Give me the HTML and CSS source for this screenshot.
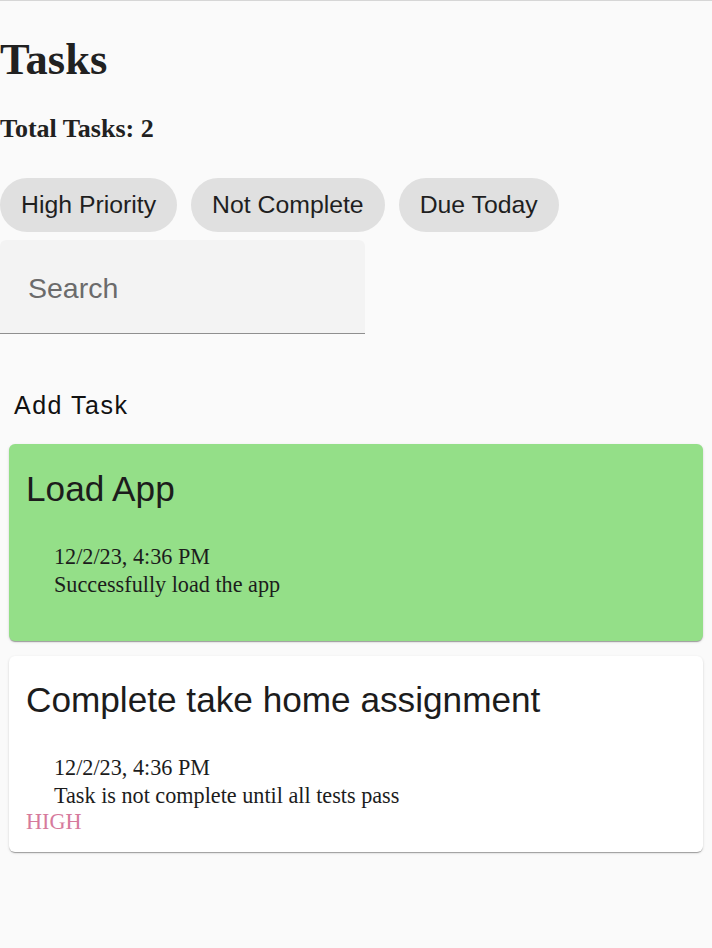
FILE: index.html
```html
<!DOCTYPE html>
<html lang="en">
<head>
<meta charset="utf-8">
<title>Tasks</title>
<link rel="stylesheet" href="styles.css">
</head>
<body>
<div class="page">
  <h1 class="title">Tasks</h1>
  <h3 class="total">Total Tasks: 2</h3>
  <div class="chips">
    <span class="chip">High Priority</span>
    <span class="chip">Not Complete</span>
    <span class="chip">Due Today</span>
  </div>
  <div class="search">
    <span class="search-label">Search</span>
  </div>
  <div class="add-task">Add Task</div>
  <div class="cards">
    <div class="card card-done">
      <div class="card-title">Load App</div>
      <div class="card-body">
        <div class="card-line">12/2/23, 4:36 PM</div>
        <div class="card-line">Successfully load the app</div>
      </div>
      <div class="priority"></div>
    </div>
    <div class="card">
      <div class="card-title">Complete take home assignment</div>
      <div class="card-body">
        <div class="card-line">12/2/23, 4:36 PM</div>
        <div class="card-line">Task is not complete until all tests pass</div>
      </div>
      <div class="priority">HIGH</div>
    </div>
  </div>
</div>
</body>
</html>
```

FILE: styles.css
```css
html, body {
  margin: 0;
  padding: 0;
  background: #fafafa;
}
body {
  font-family: "Liberation Serif", "Times New Roman", serif;
  color: #212121;
}
.page {
  border-top: 1px solid #d6d6d6;
  min-height: 946px;
}
.title {
  margin: 34px 0 0 0;
  font-size: 44.5px;
  line-height: 48px;
  font-weight: bold;
}
.total {
  margin: 32px 0 0 0;
  font-size: 26px;
  line-height: 28px;
  font-weight: bold;
}
.chips {
  display: flex;
  gap: 14px;
  margin-top: 35px;
}
.chip {
  display: flex;
  align-items: center;
  height: 54px;
  padding: 0 21px;
  border-radius: 27px;
  background: #e0e0e0;
  font-family: "Liberation Sans", Arial, sans-serif;
  font-size: 24.8px;
  color: #1f1f1f;
}
.search {
  margin-top: 8px;
  width: 365px;
  height: 93px;
  box-sizing: content-box;
  background: #f3f3f3;
  border-radius: 6px 6px 0 0;
  border-bottom: 1px solid #8f8f8f;
  display: flex;
  flex-direction: column;
}
.search-label {
  margin: 32px 0 0 28px;
  font-family: "Liberation Sans", Arial, sans-serif;
  font-size: 28.5px;
  line-height: 32px;
  color: #6b6b6b;
}
.add-task {
  margin: 56px 0 0 14px;
  font-family: "Liberation Sans", Arial, sans-serif;
  font-size: 25px;
  line-height: 30px;
  letter-spacing: 1.5px;
  color: #111;
}
.cards {
  display: flex;
  flex-direction: column;
  gap: 15px;
  margin: 24px 9px 0 9px;
}
.card {
  background: #ffffff;
  border-radius: 6px;
  padding: 24px 17px 18px 17px;
  box-shadow: 0 2px 1px -1px rgba(0,0,0,0.2), 0 1px 1px 0 rgba(0,0,0,0.14), 0 1px 3px 0 rgba(0,0,0,0.12);
}
.card-done {
  background: #94df88;
  padding-top: 25px;
}
.card-title {
  font-family: "Liberation Sans", Arial, sans-serif;
  font-size: 35.2px;
  line-height: 40px;
  color: #1c1c1c;
}
.card-body {
  margin: 34px 0 0 28px;
  font-size: 22.2px;
}
.card-line {
  line-height: 28px;
  color: #1c1c1c;
}
.priority {
  height: 24px;
  font-size: 22.2px;
  line-height: 24px;
  color: #d67a9c;
}
```
